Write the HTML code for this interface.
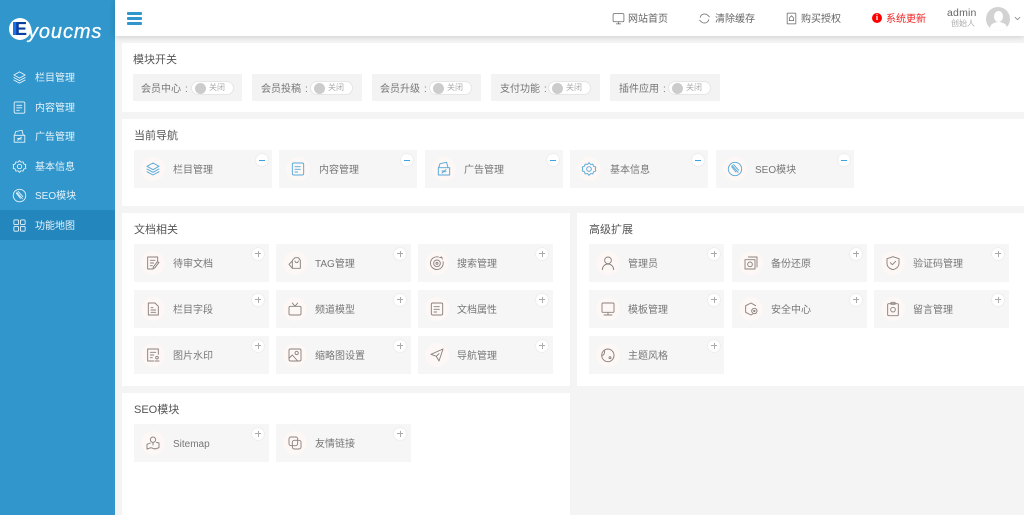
<!DOCTYPE html>
<html lang="zh">
<head>
<meta charset="utf-8">
<title>Eyoucms</title>
<style>
html,body{margin:0;padding:0;width:1024px;height:515px;overflow:hidden;background:#f4f4f4}
body{position:relative;font-family:"Liberation Sans","Noto Sans CJK SC",sans-serif;font-size:10px;color:#777;filter:blur(.3px)}
div,span,svg{position:absolute;white-space:nowrap}
svg{fill:none;stroke:currentColor;stroke-width:1.4;stroke-linecap:round;stroke-linejoin:round}
#side{left:0;top:0;width:115px;height:515px;background:#3096cc}
#act{left:0;top:210px;width:115px;height:30px;background:#2386bd}
.si{left:12px;width:15px;height:15px;color:#eaf5fb}
.st{left:35px;color:#e6f3fa;line-height:14px}
#head{left:115px;top:0;width:909px;height:36px;background:#fff;box-shadow:0 1px 6px rgba(0,0,0,.16)}
.bar{left:127px;width:15px;height:3px;background:#3096cc;border-radius:1px}
.ht{top:13px;line-height:14px;color:#666}
.hi{color:#666;width:13px;height:13px;top:12px}
.p{background:#fff}
.title{font-size:11px;line-height:16px;color:#555}
.sw{top:74px;height:27px;background:#f3f3f3}
.lb{top:82.5px;line-height:14px;color:#777}
.lb span{left:44px;top:0}
.tg{top:81px;width:41px;height:12px;background:#fff;border:1px solid #e6e6e6;border-radius:8px}
.kn{left:3px;top:.5px;width:11px;height:11px;background:#ccc;border-radius:50%}
.off{left:17px;top:0;font-size:8px;line-height:12px;color:#aaa}
.c{background:#f6f6f6;height:38px}
.n{top:150px;width:138px}
.g{width:135px}
.o{left:7px;top:7px;width:24px;height:24px;border-radius:50%;background:#fdf7f5}
.c svg{left:4px;top:3.5px;width:16px;height:16px;color:#8a817d}
.n svg{color:#56a9da}
.t{left:39px;top:14px;line-height:14px;color:#777}
.b{top:3.5px;left:118px;width:12px;height:12px;border-radius:50%;background:#fff;box-shadow:0 0 2px rgba(0,0,0,.1)}
.n .b{left:122px;top:4px}
.b:before{content:"";position:absolute;left:3px;top:5.5px;width:6px;height:1px;background:#aaa}
.b.add:after{content:"";position:absolute;left:5.5px;top:3px;width:1px;height:6px;background:#aaa}
.n .b:before{background:#3ba4de;height:1.4px}
</style>
</head>
<body>
<svg width="0" height="0" style="left:0;top:0">
<defs>
<symbol id="layer" viewBox="0 0 24 24"><path d="M12 3l9 5-9 5-9-5zM3 12l9 5 9-5M3 16l9 5 9-5"/></symbol>
<symbol id="doc" viewBox="0 0 24 24"><rect x="3.500" y="3" width="17" height="18" rx="2"/><path d="M7.500 8.500h8M7.500 12.500h8M7.500 16.500h4"/></symbol>
<symbol id="ad" viewBox="0 0 24 24"><path d="M3.500 10h17v11h-17zM4 10l2-6 10-2 2 8"/><path d="M9 18l6-5M9 15h3M12 16h3"/></symbol>
<symbol id="gear" viewBox="0 0 24 24"><path d="M12 2.500l2.300 2.700 3.400-.6 1.200 3.300 3.300 1.200-.8 2.900.8 2.900-3.300 1.200-1.200 3.300-3.400-.6-2.300 2.700-2.300-2.700-3.400.6-1.200-3.300L1.800 14.900l.8-2.900-.8-2.900 3.300-1.200 1.200-3.300 3.400.6z"/><circle cx="12" cy="12" r="3.500"/></symbol>
<symbol id="seo" viewBox="0 0 24 24"><circle cx="12" cy="12" r="10"/><path d="M7.500 6.500l9 10.500M10 5.500l7.500 8.500M7 8.500l6.500 8"/></symbol>
</defs>
</svg>

<div id="side"></div>
<div id="act"></div>
<div style="left:9px;top:18px;width:22px;height:22px;border-radius:50%;background:#fff"></div>
<div style="left:13px;top:22px;width:5px;height:13px;background:#1a73e8"></div>
<div style="left:15px;top:20px;font:bold 18px/18px 'Liberation Sans',sans-serif;color:#0b3f9e">E</div>
<div style="left:28px;top:19px;font:italic 20px/26px 'Liberation Sans',sans-serif;letter-spacing:.9px;color:#fff;-webkit-text-stroke:.3px #fff">youcms</div>

<svg class="si" style="top:69.5px" viewBox="0 0 24 24"><use href="#layer"/></svg><span class="st" style="top:72px">栏目管理</span>
<svg class="si" style="top:99.5px" viewBox="0 0 24 24"><use href="#doc"/></svg><span class="st" style="top:102px">内容管理</span>
<svg class="si" style="top:128.5px" viewBox="0 0 24 24"><use href="#ad"/></svg><span class="st" style="top:131px">广告管理</span>
<svg class="si" style="top:158.5px" viewBox="0 0 24 24"><use href="#gear"/></svg><span class="st" style="top:161px">基本信息</span>
<svg class="si" style="top:187.5px" viewBox="0 0 24 24"><use href="#seo"/></svg><span class="st" style="top:190px">SEO模块</span>
<svg class="si" style="top:217.5px" viewBox="0 0 24 24"><rect x="3" y="3" width="7.500" height="7.500" rx="1.500"/><rect x="13.500" y="3" width="7.500" height="7.500" rx="1.500"/><rect x="3" y="13.500" width="7.500" height="7.500" rx="1.500"/><rect x="13.500" y="13.500" width="7.500" height="7.500" rx="1.500"/></svg><span class="st" style="top:220px">功能地图</span>

<div id="head"></div>
<div class="bar" style="top:12px"></div><div class="bar" style="top:17px"></div><div class="bar" style="top:22px"></div>
<svg class="hi" style="left:612px" viewBox="0 0 24 24"><rect x="2" y="3" width="20" height="15" rx="2"/><path d="M8 22h8M12 18v4"/></svg><span class="ht" style="left:628px">网站首页</span>
<svg class="hi" style="left:698px" viewBox="0 0 24 24"><path d="M4 10a8.500 8.500 0 0 1 15-3l2 2M20 14a8.500 8.500 0 0 1-15 3l-2-2"/></svg><span class="ht" style="left:715px">清除缓存</span>
<svg class="hi" style="left:785px" viewBox="0 0 24 24"><rect x="4" y="2" width="16" height="20" rx="1"/><path d="M12 7l4 4v5H8v-5z"/></svg><span class="ht" style="left:801px">购买授权</span>
<div style="left:872px;top:13px;width:10px;height:10px;border-radius:50%;background:#f00;color:#fff;font:bold 8px/10px 'Liberation Serif',serif;text-align:center">i</div><span class="ht" style="left:886px;color:#f02020">系统更新</span>
<span style="left:947px;top:6px;font-size:10.500px;line-height:14px;color:#666;letter-spacing:.2px">admin</span>
<span style="left:951px;top:18px;font-size:8px;line-height:12px;color:#aaa">创始人</span>
<div style="left:986px;top:7px;width:24px;height:24px;border-radius:50%;background:#d2d2d2;overflow:hidden">
<div style="left:7.500px;top:4px;width:9px;height:11px;border-radius:50%;background:#fff"></div>
<div style="left:3.500px;top:15px;width:17px;height:12px;border-radius:50%;background:#fff"></div>
</div>
<svg style="left:1014px;top:15px;width:7px;height:7px;color:#888" viewBox="0 0 12 12"><path d="M2 4l4 4 4-4"/></svg>

<div class="p" style="left:122px;top:43px;width:902px;height:69px"></div>
<div class="p" style="left:122px;top:119px;width:902px;height:87px"></div>
<div class="p" style="left:122px;top:213px;width:448px;height:173px"></div>
<div class="p" style="left:577px;top:213px;width:447px;height:173px"></div>
<div class="p" style="left:122px;top:393px;width:448px;height:122px"></div>

<span class="title" style="left:133px;top:52px">模块开关</span>
<div class="sw" style="left:133px;width:109px"></div><span class="lb" style="left:141px">会员中心<span>:</span></span><div class="tg" style="left:191px"><div class="kn"></div><span class="off">关闭</span></div>
<div class="sw" style="left:252px;width:110px"></div><span class="lb" style="left:261px">会员投稿<span>:</span></span><div class="tg" style="left:310px"><div class="kn"></div><span class="off">关闭</span></div>
<div class="sw" style="left:372px;width:109px"></div><span class="lb" style="left:380px">会员升级<span>:</span></span><div class="tg" style="left:429px"><div class="kn"></div><span class="off">关闭</span></div>
<div class="sw" style="left:491px;width:109px"></div><span class="lb" style="left:500px">支付功能<span>:</span></span><div class="tg" style="left:548px"><div class="kn"></div><span class="off">关闭</span></div>
<div class="sw" style="left:610px;width:110px"></div><span class="lb" style="left:619px">插件应用<span>:</span></span><div class="tg" style="left:668px"><div class="kn"></div><span class="off">关闭</span></div>

<span class="title" style="left:134px;top:128px">当前导航</span>
<div class="c n" style="left:134px"><div class="o"><svg viewBox="0 0 24 24"><use href="#layer"/></svg></div><span class="t">栏目管理</span><div class="b"></div></div>
<div class="c n" style="left:279px"><div class="o"><svg viewBox="0 0 24 24"><use href="#doc"/></svg></div><span class="t" style="left:40px">内容管理</span><div class="b"></div></div>
<div class="c n" style="left:425px"><div class="o"><svg viewBox="0 0 24 24"><use href="#ad"/></svg></div><span class="t">广告管理</span><div class="b"></div></div>
<div class="c n" style="left:570px"><div class="o"><svg viewBox="0 0 24 24"><use href="#gear"/></svg></div><span class="t" style="left:40px">基本信息</span><div class="b"></div></div>
<div class="c n" style="left:716px"><div class="o"><svg viewBox="0 0 24 24"><use href="#seo"/></svg></div><span class="t">SEO模块</span><div class="b"></div></div>

<span class="title" style="left:134px;top:222px">文档相关</span>
<div class="c g" style="left:134px;top:244px"><div class="o"><svg viewBox="0 0 24 24"><path d="M19 9V3H4v18h8M8 8h7M8 12h5M8 16h3M21 11l-6 8-3 2 .5-3 6-8z"/></svg></div><span class="t">待审文档</span><div class="b add"></div></div>
<div class="c g" style="left:276px;top:244px"><div class="o"><svg viewBox="0 0 24 24"><path d="M8 20h12V8l-3-4h-5L8 8zM8 9L3 14l5 6M12 9a2.500 2.500 0 1 0 5 0"/></svg></div><span class="t">TAG管理</span><div class="b add"></div></div>
<div class="c g" style="left:418px;top:244px"><div class="o"><svg viewBox="0 0 24 24"><path d="M14 3a9.500 9.500 0 1 0 7 7"/><circle cx="12" cy="12.500" r="5"/><circle cx="12" cy="12.500" r="1.500"/><path d="M16 4l3-1 1 3"/></svg></div><span class="t">搜索管理</span><div class="b add"></div></div>
<div class="c g" style="left:134px;top:290px"><div class="o"><svg viewBox="0 0 24 24"><path d="M5 3h10l5 5v13H5z"/><path d="M9 10h3M9 13.500h7M9 17h7"/></svg></div><span class="t">栏目字段</span><div class="b add"></div></div>
<div class="c g" style="left:276px;top:290px"><div class="o"><svg viewBox="0 0 24 24"><rect x="3" y="8" width="18" height="13" rx="2"/><path d="M8 3l4 5 4-5"/></svg></div><span class="t">频道模型</span><div class="b add"></div></div>
<div class="c g" style="left:418px;top:290px"><div class="o"><svg viewBox="0 0 24 24"><use href="#doc"/></svg></div><span class="t">文档属性</span><div class="b add"></div></div>
<div class="c g" style="left:134px;top:336px"><div class="o"><svg viewBox="0 0 24 24"><path d="M20 11V3H4v18h9M8 8h8M8 12h5M8 16h3"/><circle cx="18" cy="16" r="2"/><path d="M15 21h6"/></svg></div><span class="t">图片水印</span><div class="b add"></div></div>
<div class="c g" style="left:276px;top:336px"><div class="o"><svg viewBox="0 0 24 24"><rect x="3" y="3" width="18" height="18" rx="2"/><circle cx="14.500" cy="9" r="2.500"/><path d="M3 17l5-5 8 9"/></svg></div><span class="t">缩略图设置</span><div class="b add"></div></div>
<div class="c g" style="left:418px;top:336px"><div class="o"><svg viewBox="0 0 24 24"><path d="M21 3L3 11l8 3 4 7zM11 14l4-4"/></svg></div><span class="t">导航管理</span><div class="b add"></div></div>

<span class="title" style="left:589px;top:222px">高级扩展</span>
<div class="c g" style="left:589px;top:244px"><div class="o"><svg viewBox="0 0 24 24"><circle cx="12" cy="8" r="5"/><path d="M3.500 22a8.500 8.500 0 0 1 17 0"/></svg></div><span class="t">管理员</span><div class="b add" style="left:119px"></div></div>
<div class="c g" style="left:732px;top:244px"><div class="o"><svg viewBox="0 0 24 24"><path d="M8 3h13v15M3 7h15v14H3z"/><circle cx="10.500" cy="14" r="3.500"/></svg></div><span class="t">备份还原</span><div class="b add"></div></div>
<div class="c g" style="left:874px;top:244px"><div class="o"><svg viewBox="0 0 24 24"><path d="M12 2.500l9 3v7c0 5-4 8-9 9.500-5-1.500-9-4.500-9-9.500v-7z"/><path d="M8 11.500l3 3 5-5"/></svg></div><span class="t">验证码管理</span><div class="b add"></div></div>
<div class="c g" style="left:589px;top:290px"><div class="o"><svg viewBox="0 0 24 24"><rect x="3" y="3" width="18" height="14" rx="1.500"/><path d="M12 17v4M6 21h12"/></svg></div><span class="t">模板管理</span><div class="b add" style="left:119px"></div></div>
<div class="c g" style="left:732px;top:290px"><div class="o"><svg viewBox="0 0 24 24"><path d="M19 7l-7-4-8 4v10l8 4 2-1"/><circle cx="17" cy="15" r="4"/><circle cx="17" cy="15" r="1"/></svg></div><span class="t">安全中心</span><div class="b add"></div></div>
<div class="c g" style="left:874px;top:290px"><div class="o"><svg viewBox="0 0 24 24"><rect x="4" y="4" width="16" height="18" rx="1.500"/><path d="M9 2h6v3H9z"/><circle cx="12" cy="13" r="3.500"/></svg></div><span class="t">留言管理</span><div class="b add"></div></div>
<div class="c g" style="left:589px;top:336px"><div class="o"><svg viewBox="0 0 24 24"><path d="M12 3a9.500 9.500 0 1 0 2 18.800c3-.8 7-3.800 7-8.800a9.500 9.500 0 0 0-9-10z"/><path d="M3 13c3-1 4-4 4-7"/><circle cx="15" cy="16" r="1.500"/></svg></div><span class="t">主题风格</span><div class="b add" style="left:119px"></div></div>

<span class="title" style="left:134px;top:402px">SEO模块</span>
<div class="c g" style="left:134px;top:424px"><div class="o"><svg viewBox="0 0 24 24"><circle cx="12" cy="7" r="4"/><path d="M12 11v4M8 12l-5 2v7l6-2 6 2 6-2v-7l-4-1"/></svg></div><span class="t">Sitemap</span><div class="b add"></div></div>
<div class="c g" style="left:276px;top:424px"><div class="o"><svg viewBox="0 0 24 24"><rect x="3" y="3" width="13" height="13" rx="3"/><rect x="8" y="8" width="13" height="13" rx="3"/></svg></div><span class="t">友情链接</span><div class="b add"></div></div>
</body>
</html>
